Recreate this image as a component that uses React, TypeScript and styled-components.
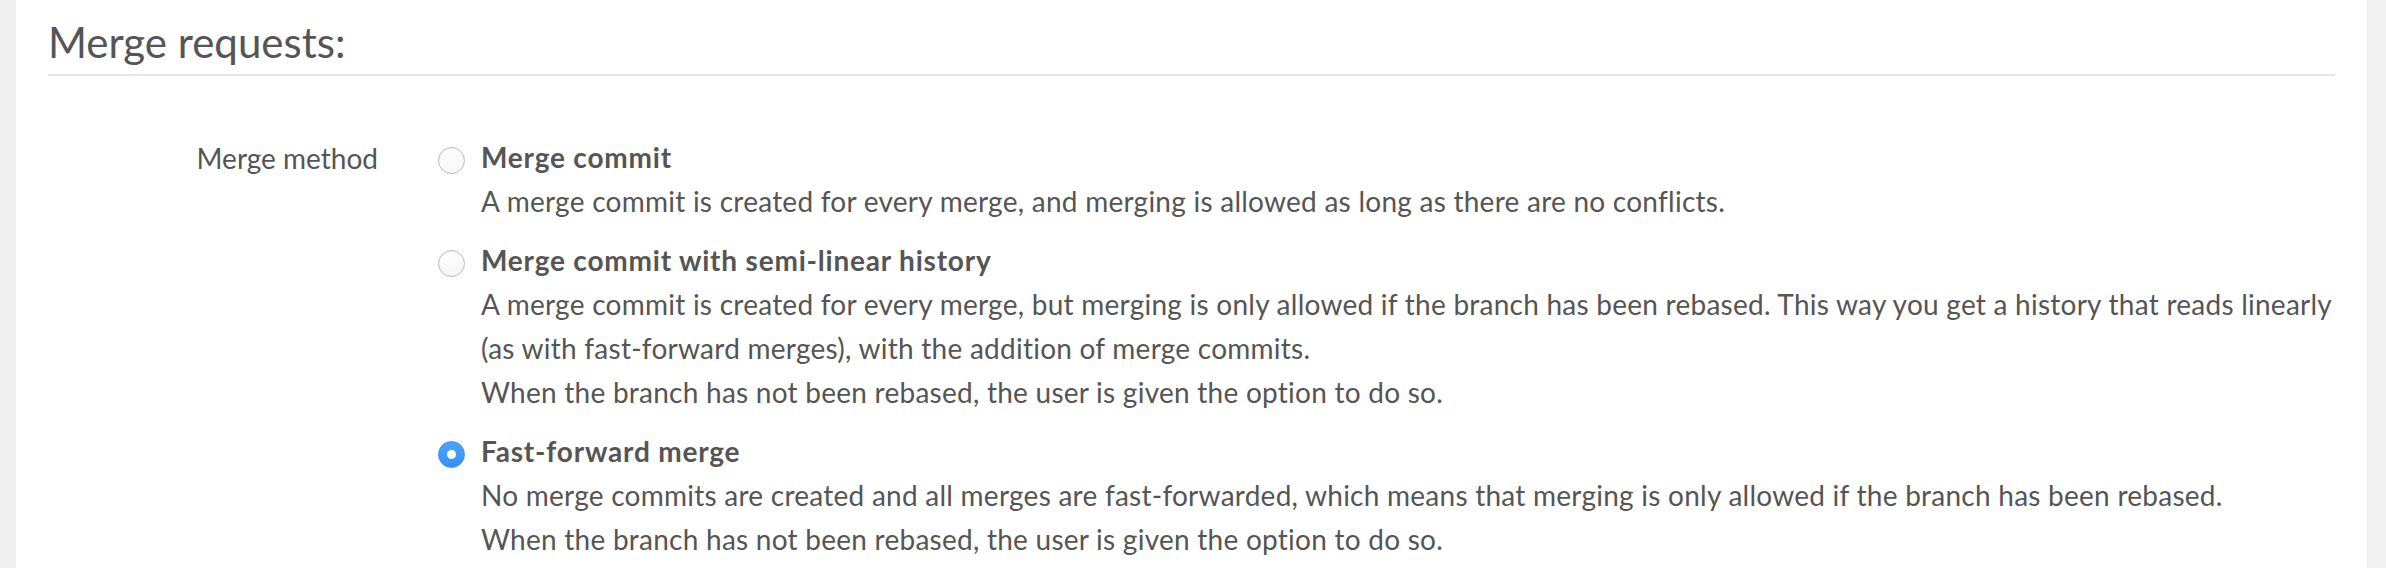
import React from "react";
import styled, { createGlobalStyle } from "styled-components";

const GlobalStyle = createGlobalStyle`
  html, body {
    margin: 0;
    padding: 0;
    background: #f0f0f0;
    font-family: Lato, "Liberation Sans", sans-serif;
  }
`;

type Option = {
  id: string;
  title: string;
  lines: string[];
  checked?: boolean;
};

const options: Option[] = [
  {
    id: "merge",
    title: "Merge commit",
    lines: [
      "A merge commit is created for every merge, and merging is allowed as long as there are no conflicts.",
    ],
  },
  {
    id: "rebase_merge",
    title: "Merge commit with semi-linear history",
    lines: [
      "A merge commit is created for every merge, but merging is only allowed if the branch has been rebased. This way you get a history that reads linearly",
      "(as with fast-forward merges), with the addition of merge commits.",
      "When the branch has not been rebased, the user is given the option to do so.",
    ],
  },
  {
    id: "ff",
    title: "Fast-forward merge",
    checked: true,
    lines: [
      "No merge commits are created and all merges are fast-forwarded, which means that merging is only allowed if the branch has been rebased.",
      "When the branch has not been rebased, the user is given the option to do so.",
    ],
  },
];

const App: React.FC = () => {
  return (
    <Page>
      <GlobalStyle />
      <Panel>
        <SectionTitle>Merge requests:</SectionTitle>
        <FormRow>
          <Label>Merge method</Label>
          <Choices>
            {options.map((opt) => (
              <Choice key={opt.id}>
                <Radio $checked={!!opt.checked} />
                <ChoiceBody>
                  <ChoiceTitle>{opt.title}</ChoiceTitle>
                  <HelpText>
                    {opt.lines.map((line, i) => (
                      <span key={i}>
                        {line}
                        {i < opt.lines.length - 1 && <br />}
                      </span>
                    ))}
                  </HelpText>
                </ChoiceBody>
              </Choice>
            ))}
          </Choices>
        </FormRow>
      </Panel>
      <Scrollbar />
    </Page>
  );
};

const Page = styled.div`
  display: flex;
  height: 568px;
  padding-left: 16px;
  background: #f0f0f0;
  overflow: hidden;
`;

const Panel = styled.div`
  flex: 1;
  background: #fff;
  padding: 0 32px;
  color: #555;
`;

const Scrollbar = styled.div`
  width: 18px;
  background: #f2f2f2;
  border-left: 1px solid #ececec;
`;

const SectionTitle = styled.h4`
  margin: 0;
  padding: 17px 0 7px 0;
  font-size: 42px;
  line-height: 50px;
  font-weight: 400;
  color: #555;
  border-bottom: 2px solid #e5e5e5;
`;

const FormRow = styled.div`
  display: grid;
  grid-template-columns: 330px 1fr;
  column-gap: 60px;
  margin-top: 59px;
`;

const Label = styled.div`
  text-align: right;
  font-size: 28px;
  line-height: 44px;
  padding-top: 1px;
  color: #555;
`;

const Choices = styled.div`
  display: flex;
  flex-direction: column;
  gap: 15px;
`;

const Choice = styled.div`
  display: flex;
  align-items: flex-start;
`;

const Radio = styled.span<{ $checked: boolean }>`
  flex: none;
  box-sizing: border-box;
  width: 27px;
  height: 27px;
  margin-top: 12px;
  margin-right: 16px;
  border-radius: 50%;
  position: relative;
  border: 1px solid ${(p) => (p.$checked ? "#3a8ff2" : "#b9b9b9")};
  background: ${(p) =>
    p.$checked
      ? "linear-gradient(#4da3ff, #3590f7)"
      : "linear-gradient(#ffffff, #f6f6f6)"};
  box-shadow: ${(p) =>
    p.$checked ? "none" : "inset 0 1px 1px rgba(0, 0, 0, 0.05)"};

  &::after {
    content: "";
    display: ${(p) => (p.$checked ? "block" : "none")};
    position: absolute;
    left: 50%;
    top: 50%;
    width: 9px;
    height: 9px;
    margin: -4.5px 0 0 -4.5px;
    border-radius: 50%;
    background: #fff;
  }
`;

const ChoiceBody = styled.div`
  display: flex;
  flex-direction: column;
`;

const ChoiceTitle = styled.div`
  font-size: 28px;
  line-height: 44px;
  font-weight: 700;
  letter-spacing: 0.8px;
  color: #555;
`;

const HelpText = styled.div`
  font-size: 28px;
  line-height: 44px;
  letter-spacing: 0.25px;
  color: #555;
`;

export default App;
